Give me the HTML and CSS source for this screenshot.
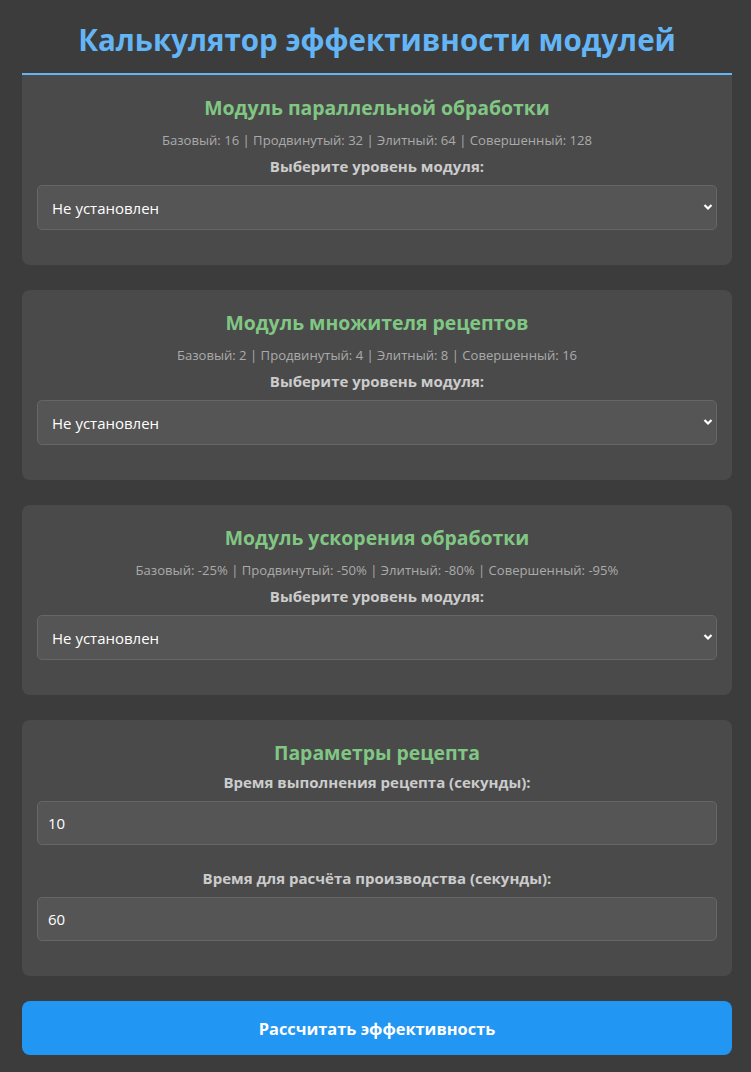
FILE: index.html
```html
<!DOCTYPE html>
<html lang="ru">
<head>
    <meta charset="utf-8">
    <link rel="stylesheet" href="styles.css">
</head>
<body>
    <div class="container">
        <h1 class="title">Калькулятор эффективности модулей</h1>

        <div class="module-card">
            <h3 class="module-title">Модуль параллельной обработки</h3>
            <div class="module-info">Базовый: 16 | Продвинутый: 32 | Элитный: 64 | Совершенный: 128</div>
            <label class="field-label">Выберите уровень модуля:</label>
            <div class="select-wrap">
                <select class="field">
                    <option>Не установлен</option>
                    <option>Базовый</option>
                    <option>Продвинутый</option>
                    <option>Элитный</option>
                    <option>Совершенный</option>
                </select>
                <svg class="select-arrow" width="10" height="8" viewBox="0 0 10 8"><path d="M1.5 2 L5 5.5 L8.5 2" fill="none" stroke="#fff" stroke-width="2.2"/></svg>
            </div>
        </div>

        <div class="module-card">
            <h3 class="module-title">Модуль множителя рецептов</h3>
            <div class="module-info">Базовый: 2 | Продвинутый: 4 | Элитный: 8 | Совершенный: 16</div>
            <label class="field-label">Выберите уровень модуля:</label>
            <div class="select-wrap">
                <select class="field">
                    <option>Не установлен</option>
                    <option>Базовый</option>
                    <option>Продвинутый</option>
                    <option>Элитный</option>
                    <option>Совершенный</option>
                </select>
                <svg class="select-arrow" width="10" height="8" viewBox="0 0 10 8"><path d="M1.5 2 L5 5.5 L8.5 2" fill="none" stroke="#fff" stroke-width="2.2"/></svg>
            </div>
        </div>

        <div class="module-card">
            <h3 class="module-title">Модуль ускорения обработки</h3>
            <div class="module-info">Базовый: -25% | Продвинутый: -50% | Элитный: -80% | Совершенный: -95%</div>
            <label class="field-label">Выберите уровень модуля:</label>
            <div class="select-wrap">
                <select class="field">
                    <option>Не установлен</option>
                    <option>Базовый</option>
                    <option>Продвинутый</option>
                    <option>Элитный</option>
                    <option>Совершенный</option>
                </select>
                <svg class="select-arrow" width="10" height="8" viewBox="0 0 10 8"><path d="M1.5 2 L5 5.5 L8.5 2" fill="none" stroke="#fff" stroke-width="2.2"/></svg>
            </div>
        </div>

        <div class="module-card">
            <h3 class="module-title">Параметры рецепта</h3>
            <label class="field-label">Время выполнения рецепта (секунды):</label>
            <input class="field" type="number" value="10">
            <label class="field-label field-label-gap">Время для расчёта производства (секунды):</label>
            <input class="field" type="number" value="60">
        </div>

        <button class="calc-button">Рассчитать эффективность</button>
    </div>
</body>
</html>
```

FILE: styles.css
```css
body {
    margin: 0;
    background-color: #3c3c3c;
    color: #e0e0e0;
    font-family: 'Open Sans', 'Noto Sans', sans-serif;
}

.container {
    padding: 0 19px 0 22px;
}

.title {
    margin: 0;
    padding: 20px 0 13px;
    text-align: center;
    color: #64b5f6;
    font-size: 29.5px;
    font-weight: bold;
    line-height: 40px;
    border-bottom: 2px solid #64b5f6;
}

.module-card {
    display: flex;
    flex-direction: column;
    background-color: #4a4a4a;
    border-radius: 8px;
    padding: 20px 15px 35px;
    margin-bottom: 25px;
}

.title + .module-card {
    border-radius: 0 0 8px 8px;
}

.module-title {
    margin: 0 0 6px;
    text-align: center;
    color: #81c784;
    font-size: 19.4px;
    line-height: 26px;
}

.module-info {
    text-align: center;
    color: #aaaaaa;
    font-size: 13.1px;
    line-height: 18px;
    margin: 4px 0 7px;
}

.field-label {
    text-align: center;
    color: #cccccc;
    font-size: 15px;
    font-weight: bold;
    line-height: 20px;
    margin-bottom: 9px;
}

.field-label-gap {
    margin-top: 23px;
}

.select-wrap {
    position: relative;
}

.field {
    box-sizing: border-box;
    width: 100%;
    height: 45px;
    padding: 0 14px;
    background-color: #555555;
    color: #ffffff;
    border: 1px solid #666666;
    border-radius: 5px;
    font-family: inherit;
    font-size: 15px;
    outline: none;
    appearance: none;
    -moz-appearance: textfield;
}

input.field {
    height: 44px;
    padding: 0 10px;
}

input.field::-webkit-inner-spin-button,
input.field::-webkit-outer-spin-button {
    -webkit-appearance: none;
    margin: 0;
}

.select-arrow {
    position: absolute;
    right: 4px;
    top: 18px;
    pointer-events: none;
}

.calc-button {
    display: block;
    width: 100%;
    height: 54px;
    margin-top: 1px;
    background-color: #2196f3;
    color: #ffffff;
    border: none;
    border-radius: 8px;
    font-family: inherit;
    font-size: 16.4px;
    font-weight: bold;
    cursor: pointer;
}
```
